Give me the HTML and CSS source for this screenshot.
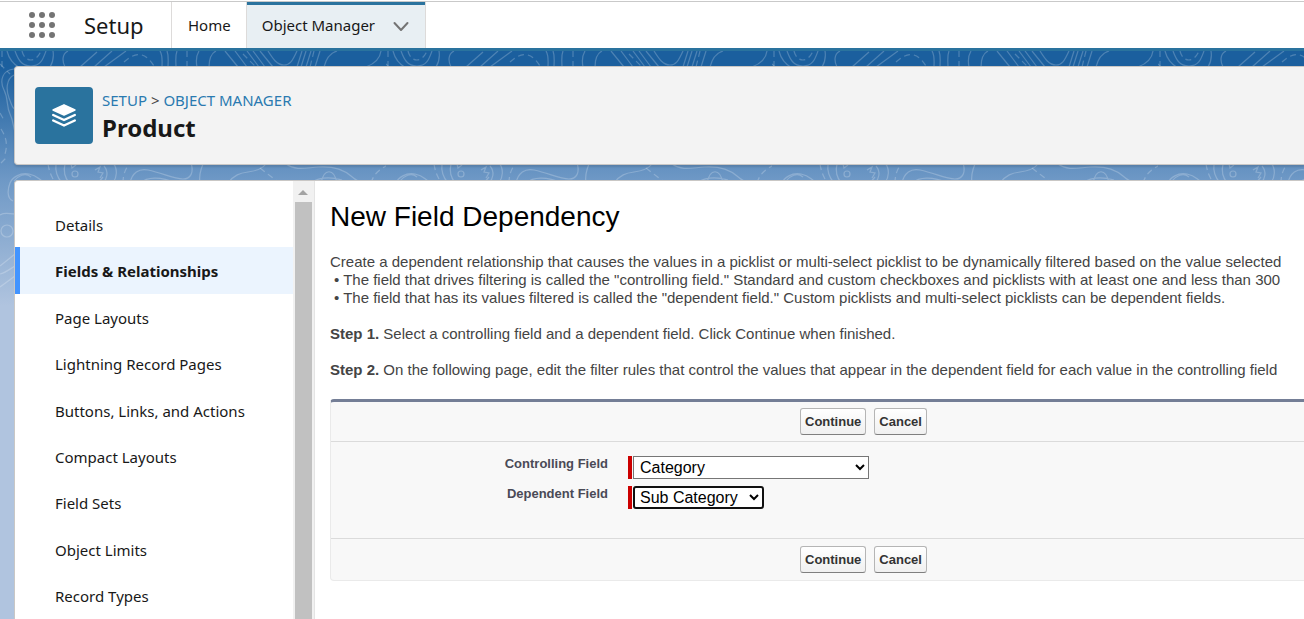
FILE: index.html
```html
<!DOCTYPE html>
<html lang="en">
<head>
    <meta charset="utf-8">
    <title>Product | New Field Dependency</title>
    <meta name="viewport" content="width=device-width, initial-scale=1.0">
    <link rel="stylesheet" href="styles.css">
</head>
<body>
    <header class="topbar">
        <button class="launcher" type="button" aria-label="App Launcher">
            <svg width="28" height="28" viewBox="0 0 28 28" fill="#747474">
                <circle cx="4" cy="4" r="3"/><circle cx="14" cy="4" r="3"/><circle cx="24" cy="4" r="3"/>
                <circle cx="4" cy="14" r="3"/><circle cx="14" cy="14" r="3"/><circle cx="24" cy="14" r="3"/>
                <circle cx="4" cy="24" r="3"/><circle cx="14" cy="24" r="3"/><circle cx="24" cy="24" r="3"/>
            </svg>
        </button>
        <span class="app-name">Setup</span>
        <nav class="tabs">
            <a class="tab" href="#home">Home</a>
            <a class="tab active" href="#objects">Object Manager
                <svg width="16" height="14" viewBox="0 0 16 14" fill="none" stroke="#747474" stroke-width="2" stroke-linecap="round" stroke-linejoin="round"><path d="M1.500 5L8 12l6.500-7"/></svg>
            </a>
        </nav>
    </header>

    <main class="page">
        <svg class="contours" width="100%" height="270" aria-hidden="true">
            <defs>
                <pattern id="contour" width="386" height="270" patternUnits="userSpaceOnUse">
                    <g fill="none" stroke="#fff" stroke-opacity=".22" stroke-width="1.2">
                        <path d="M7 0C9 8 13 13 20 17M15 0c3 8 6 15 16 15S43 8 46 0M53 0c1 6 0 11-3 16M68 0c-6 3-6 10-3 16"/>
                        <path d="M22 0c3 12 14 12 19 0M124 11c8-7 19-14 30 4M187 0v16M243 3l13 13M314 0l-4 16M2 0v16" stroke-dasharray="6 4"/>
                        <path d="M80 16L97 1M94 16l18-16M104 16l22-16M160 0c3 5 2 11 2 16M167 0c2 5 1 11 1 16M177 0c-2 5-1 11-1 16M199 0c-3 5-3 11-2 16M216 0c-6 3-7 9-7 16"/>
                        <path d="M225 0l13 16M235 0l12 16M247 0l12 16M253 0l12 16M260 0l13 16M268 0c5 8 9 14 16 14S293 8 297 0M302 0l-5 16M306 0l-5 16M311 0l-5 16M320 0l-5 16M337 0c-7 2-11 8-13 16M381 0c-1 8-7 13-15 16"/>
                        <path d="M14 18C3 19-1 29 4 39s2 16 6 24 3 15 6 20M14 24C6 28 6 39 9 47s4 11 7 12"/>
                        <path d="M1 78c5 8 7 15 4 25M0 13l10 10M0 62l4 7M1 112l7-7" stroke-dasharray="6 4"/>
                        <path d="M13 150C6 147 8 137 10 132s10-11 19-9 8 4 15 8M14 130c4-5 11-9 17-4M0 164c5-3 9-1 15-1M15 215c-5 3-10 7-15 8M15 203l-15 12M15 225l-15 11"/>
                        <circle cx="7" cy="180" r="6"/><circle cx="75" cy="123" r="3"/>
                        <path d="M56 113c-1 7 1 13 6 19M65 113c-2 8 0 13 4 19M71 113l1 4 4-3M95 119l5-3-2 5 5 1-3 5M104 115c5 6 3 13-1 17M113 112c5 6 4 14 0 20M98 132l5-6"/>
                        <path d="M130 132c2-10 9-15 18-13 15 3 25 9 35 9 8 0 11-7 8-16M140 132c7-6 20-7 36 0M203 113c-3 7-4 13-3 19M228 132c6-8 12-10 20-11s14-3 18-8M286 113c10 7 19 4 32 3s25 2 33 9 8 4 10 8M310 132c8-5 18-7 32-3M321 132c3-15 13-15 16 0"/>
                        <path d="M48 113c1 6 2 9 5 15M123 132c0-8 2-13 6-19M260 117l18 14M371 132c3-10 9-14 17-18" stroke-dasharray="6 4"/>
                    </g>
                </pattern>
            </defs>
            <rect width="100%" height="270" fill="url(#contour)"/>
        </svg>

        <section class="card object-header">
            <span class="object-icon">
                <svg width="26" height="26" viewBox="0 0 26 26" fill="none" stroke="#fff" stroke-width="2.4" stroke-linecap="round" stroke-linejoin="round">
                    <path d="M13 1.800L24 7 13 12 2 7z" fill="#fff" stroke-width="1.4"/>
                    <path d="M2.200 12L13 17l10.800-5M2.200 17.500L13 22.500l10.800-5"/>
                </svg>
            </span>
            <div>
                <div class="crumbs"><a href="#setup">SETUP</a> <span>&gt;</span> <a href="#objects">OBJECT MANAGER</a></div>
                <h1>Product</h1>
            </div>
        </section>

        <section class="card workspace">
            <nav class="sidebar">
                <a href="#details">Details</a>
                <a class="selected" href="#fields">Fields &amp; Relationships</a>
                <a href="#layouts">Page Layouts</a>
                <a href="#pages">Lightning Record Pages</a>
                <a href="#actions">Buttons, Links, and Actions</a>
                <a href="#compact">Compact Layouts</a>
                <a href="#sets">Field Sets</a>
                <a href="#limits">Object Limits</a>
                <a href="#types">Record Types</a>
            </nav>
            <div class="scrollbar"><span class="arrow"></span><span class="thumb"></span></div>

            <div class="content">
                <h2>New Field Dependency</h2>
                <div class="intro">
                    <p>Create a dependent relationship that causes the values in a picklist or multi-select picklist to be dynamically filtered based on the value selected</p>
                    <ul>
                        <li>The field that drives filtering is called the "controlling field." Standard and custom checkboxes and picklists with at least one and less than 300</li>
                        <li>The field that has its values filtered is called the "dependent field." Custom picklists and multi-select picklists can be dependent fields.</li>
                    </ul>
                    <p class="step"><b>Step 1.</b> Select a controlling field and a dependent field. Click Continue when finished.</p>
                    <p class="step"><b>Step 2.</b> On the following page, edit the filter rules that control the values that appear in the dependent field for each value in the controlling field</p>
                </div>

                <form class="edit-block">
                    <div class="btn-row">
                        <button class="btn" type="button">Continue</button>
                        <button class="btn" type="button">Cancel</button>
                    </div>
                    <div class="fields">
                        <div class="field">
                            <label for="controlling">Controlling Field</label>
                            <span class="required"><select id="controlling" class="wide"><option>Category</option></select></span>
                        </div>
                        <div class="field">
                            <label for="dependent">Dependent Field</label>
                            <span class="required"><select id="dependent" class="focused"><option>Sub Category</option></select></span>
                        </div>
                    </div>
                    <div class="btn-row">
                        <button class="btn" type="button">Continue</button>
                        <button class="btn" type="button">Cancel</button>
                    </div>
                </form>
            </div>
        </section>
    </main>
</body>
</html>
```

FILE: styles.css
```css
* { box-sizing: border-box; }

body {
    margin: 0;
    padding-top: 1px;
    height: 100vh;
    overflow: hidden;
    display: flex;
    flex-direction: column;
    background: #fff;
    color: #181818;
    font-family: "Noto Sans", "Open Sans", sans-serif;
    font-size: 15px;
}

h1, h2, p, ul { margin: 0; padding: 0; }

a { color: inherit; text-decoration: none; }

/* top navigation */
.topbar {
    display: flex;
    align-items: stretch;
    flex: none;
    height: 50px;
    border-top: 1px solid #c9c9c9;
    border-bottom: 3px solid #2a739e;
}

.launcher {
    display: flex;
    align-items: center;
    padding: 0;
    margin-left: 28px;
    border: none;
    background: none;
}

.app-name {
    width: 115px;
    padding-left: 28px;
    font-size: 22px;
    line-height: 46px;
}

.tabs { display: flex; }

.tab {
    display: flex;
    align-items: center;
    gap: 18px;
    padding: 0 15px 0 16px;
    border-left: 1px solid #dddbda;
    line-height: 24px;
}

.tab.active {
    padding: 0 16px 0 15px;
    border-right: 1px solid #dddbda;
    background: #e8eff3;
    box-shadow: inset 0 3px 0 #2a739e;
}

/* page background */
.page {
    position: relative;
    flex: 1;
    display: flex;
    flex-direction: column;
    gap: 15px;
    min-height: 0;
    padding: 15px 0 0 14px;
    background: linear-gradient(#1b5f9e 0, #1b5f9e 16px, #6f99c6 130px, #b0c4df 255px);
}

.contours {
    position: absolute;
    top: 0;
    left: 0;
}

.card {
    position: relative;
    border: 1px solid #c9c7c5;
    border-right: none;
    background: #fff;
}

.object-header {
    display: flex;
    gap: 9px;
    flex: none;
    height: 99px;
    padding: 20px;
    border-radius: 4px 0 0 4px;
    background: #f3f3f3;
    box-shadow: 0 2px 2px rgba(0,0,0,0.12);
}

.object-icon {
    display: flex;
    align-items: center;
    justify-content: center;
    width: 58px;
    height: 57px;
    border-radius: 4px;
    background: #2a739e;
}

.crumbs {
    color: #444;
    font-size: 15px;
    line-height: 27px;
}

.crumbs a { color: #2a7ab0; }

h1 {
    font-size: 24px;
    line-height: 28px;
}

.workspace {
    display: flex;
    flex: 1;
    min-height: 0;
    border-bottom: none;
    border-radius: 4px 0 0 0;
    overflow: hidden;
}

/* sidebar */
.sidebar {
    flex: none;
    width: 278px;
    padding-top: 20px;
}

.sidebar a {
    display: block;
    height: 46px;
    padding-left: 40px;
    line-height: 48px;
}

.sidebar a:nth-child(3n+5) { margin-top: 1px; }

.sidebar .selected {
    height: 47px;
    padding-left: 35px;
    border-left: 5px solid #4294ff;
    background: #ebf4fe;
    font-weight: bold;
}

.scrollbar {
    display: flex;
    flex-direction: column;
    align-items: center;
    flex: none;
    width: 22px;
    padding-right: 1px;
    border-right: 1px solid #e4e4e4;
    background: #f1f1f1;
}

.arrow {
    margin: 9px 0 7px;
    border: 5px solid transparent;
    border-top: none;
    border-bottom-color: #a3a3a3;
}

.thumb {
    flex: 1;
    width: 17px;
    background: #c1c1c1;
}

/* dependency form */
.content {
    flex: 1;
    min-width: 0;
    padding: 20px 0 0 15px;
    font-family: "Liberation Sans", Arial, sans-serif;
    white-space: nowrap;
}

h2 {
    color: #000;
    font-size: 28px;
    font-weight: normal;
    line-height: 32px;
}

.intro {
    margin: 20px 0;
    color: #444;
    font-size: 15px;
    line-height: 18px;
}

.intro li {
    list-style: none;
    padding-left: 4px;
}

.intro li::before { content: "• "; }

.step { margin-top: 18px; }

.edit-block {
    border: 1px solid #eaeaea;
    border-top: 3px solid #747e96;
    border-right: none;
    border-radius: 4px 0 0 4px;
    background: #f8f8f8;
}

.btn-row {
    display: flex;
    gap: 8px;
    padding: 6px 0 6px 469px;
}

.fields + .btn-row { padding-block: 7px; }

.btn {
    height: 27px;
    padding: 0 4px;
    border: 1px solid #b5b5b5;
    border-bottom-color: #7f7f7f;
    border-radius: 3px;
    background: linear-gradient(#fff, #f0f0f0);
    color: #333;
    font: bold 13px "Liberation Sans", Arial, sans-serif;
}

.fields {
    display: flex;
    flex-direction: column;
    gap: 7px;
    height: 98px;
    padding-top: 14px;
    border-top: 1px solid #dbdbdb;
    border-bottom: 1px solid #dbdbdb;
}

.field {
    display: flex;
    gap: 20px;
}

.field label {
    width: 277px;
    color: #4a4a56;
    font-size: 13px;
    font-weight: bold;
    line-height: 16px;
    text-align: right;
}

.required {
    display: flex;
    border-left: 4px solid #c00;
    padding-left: 1px;
}

select {
    height: 23px;
    padding: 0 3px 0 2px;
    border: 1px solid #767676;
    background: #fff;
    color: #000;
    font: 16px "Liberation Sans", Arial, sans-serif;
}

.wide { width: 236px; }

.focused {
    width: 131px;
    padding-left: 1px;
    border: 2px solid #101010;
    border-radius: 3px;
}
```
